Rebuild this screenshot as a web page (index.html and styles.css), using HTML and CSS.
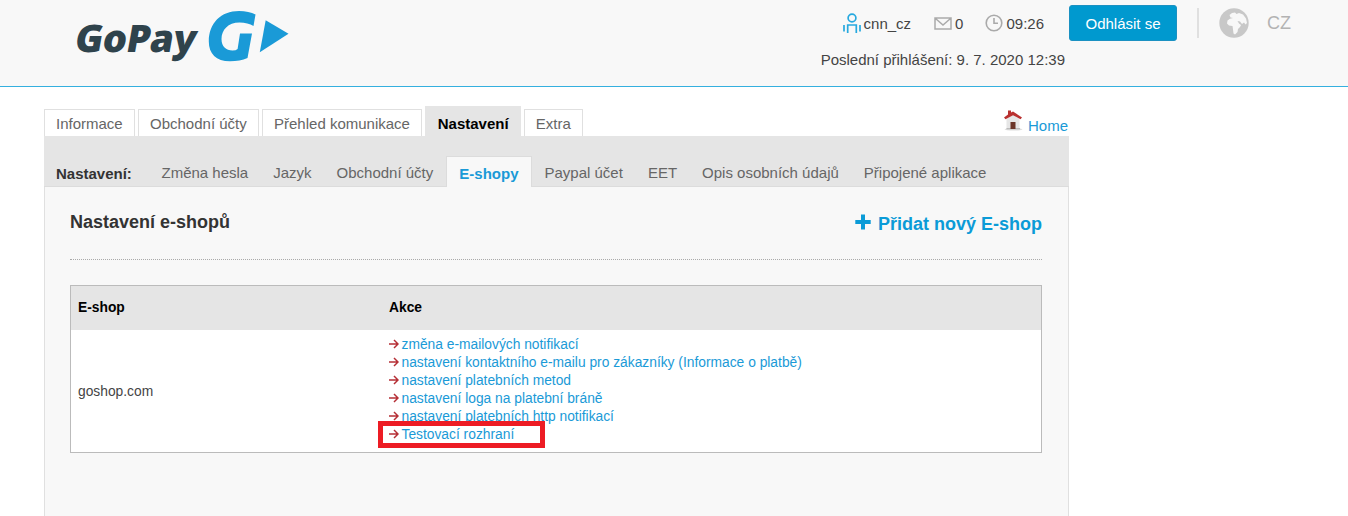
FILE: index.html
```html
<!DOCTYPE html>
<html lang="cs">
<head>
<meta charset="UTF-8">
<meta name="viewport" content="width=device-width, initial-scale=1.0">
<title>GoPay - Nastavení e-shopů</title>
<link rel="stylesheet" href="styles.css">
</head>
<body>
<header class="header">
  <a class="logo">
    <span class="logo-text">GoPay</span>
    <svg class="logo-mark" width="82" height="52" viewBox="0 0 82 52">
      <path fill="#1a9ad7" d="M47.500 4.500 L45.500 16 Q40 12.500 31.500 12.500 C20 12.500 13.500 20 13.500 29 C13.500 36.500 18 40.500 24.500 40.500 Q28 40.500 29.600 39 L32 23.500 H44 L39.500 48 Q32 51.300 22 51.300 C8 51.300 0.800 43.500 0.800 31.500 C0.800 13 13 1 31 1 Q41 1 47.500 4.500 Z"/>
      <path fill="#1a9ad7" d="M57.700 10.300 L80.500 23.700 L51.800 42.300 Z"/>
    </svg>
  </a>
  <div class="account">
    <div class="account-row">
      <span class="account-item user">
        <svg width="18" height="21" viewBox="0 0 18 21" fill="none" stroke="#27a9df" stroke-width="1.700">
          <circle cx="9" cy="5" r="3.900"/>
          <path d="M4.700 20 V12 H13.300 V20 M1 12 V18.500 M17 12 V18.500"/>
        </svg>
        <span>cnn_cz</span>
      </span>
      <span class="account-item mail">
        <svg width="18" height="13" viewBox="0 0 18 13" fill="none" stroke="#aaa" stroke-width="1.500">
          <path d="M1 1 H17 V12 H1 Z M1.500 1.500 L9 8 L16.500 1.500"/>
        </svg>
        <span>0</span>
      </span>
      <span class="account-item time">
        <svg width="18" height="18" viewBox="0 0 18 18" fill="none" stroke="#aaa" stroke-width="1.600">
          <circle cx="9" cy="9" r="7.800"/>
          <path d="M9 4 V9.300 H13"/>
        </svg>
        <span>09:26</span>
      </span>
    </div>
    <div class="last-login">Poslední přihlášení: 9. 7. 2020 12:39</div>
  </div>
  <button class="logout">Odhlásit se</button>
  <div class="language">
    <svg width="30" height="30" viewBox="0 0 30 30">
      <circle cx="15" cy="15" r="14.700" fill="#c8c8c8"/>
      <path fill="#f8f8f8" d="M10.500 7 L13 5 L16 4.500 L17.500 6 L20 5 L24 6.500 L27 10.500 L28 15 L26.500 16.500 L25 14.500 L23 16 L21 13.500 L18.500 13 L20 15.500 L22 17 L21 19 L19 21 L18.500 24 L16 26.500 L14.500 25.500 L14 21.500 L13.500 18 L10 17.500 L8 15.500 L8.500 12.500 L11 10.800 L14 10 L11.500 9.500 Z"/>
    </svg>
    <span>CZ</span>
  </div>
</header>

<main class="page">
  <div class="top">
    <nav class="tabs">
      <a class="tab">Informace</a>
      <a class="tab">Obchodní účty</a>
      <a class="tab">Přehled komunikace</a>
      <a class="tab active">Nastavení</a>
      <a class="tab">Extra</a>
    </nav>
    <a class="home">
      <svg width="20" height="21" viewBox="0 0 20 21">
        <ellipse cx="10.500" cy="19.300" rx="9" ry="1.300" fill="#ddd"/>
        <path fill="#e6e6e6" d="M3.500 9 L10 4 L16.500 9 V19 H3.500 Z"/>
        <path fill="#bbb" d="M3.500 18 H17 V19.300 H3.500 Z"/>
        <path fill="#6b3529" d="M7.500 12 H12.500 V19 H7.500 Z"/>
        <path fill="#b9302f" d="M5 0.500 H8 V2.500 L10 1.500 L19 7.500 L17.500 9.200 L10 5.200 L2.500 9.200 L1 7.500 L5 4.500 Z"/>
      </svg>
      <span>Home</span>
    </a>
  </div>

  <nav class="subnav">
    <strong class="subnav-title">Nastavení:</strong>
    <a class="subtab">Změna hesla</a>
    <a class="subtab">Jazyk</a>
    <a class="subtab">Obchodní účty</a>
    <a class="subtab active">E-shopy</a>
    <a class="subtab">Paypal účet</a>
    <a class="subtab">EET</a>
    <a class="subtab">Opis osobních údajů</a>
    <a class="subtab">Připojené aplikace</a>
  </nav>

  <section class="content">
    <div class="content-head">
      <h1>Nastavení e-shopů</h1>
      <a class="add">
        <svg width="16" height="16" viewBox="0 0 16 16"><path fill="#0b9bd7" d="M6 0.500 H10 V6 H15.700 V10 H10 V15.500 H6 V10 H0.300 V6 H6 Z"/></svg>
        <span>Přidat nový E-shop</span>
      </a>
    </div>

    <table class="shops">
      <thead>
        <tr><th class="col-shop">E-shop</th><th>Akce</th></tr>
      </thead>
      <tbody>
        <tr>
          <td>goshop.com</td>
          <td>
            <ul class="actions">
              <li><svg class="arrow" viewBox="0 0 10 10"><path d="M0 5 H8.500 M5 1 L9 5 L5 9"/></svg><a>změna e-mailových notifikací</a></li>
              <li><svg class="arrow" viewBox="0 0 10 10"><path d="M0 5 H8.500 M5 1 L9 5 L5 9"/></svg><a>nastavení kontaktního e-mailu pro zákazníky (Informace o platbě)</a></li>
              <li><svg class="arrow" viewBox="0 0 10 10"><path d="M0 5 H8.500 M5 1 L9 5 L5 9"/></svg><a>nastavení platebních metod</a></li>
              <li><svg class="arrow" viewBox="0 0 10 10"><path d="M0 5 H8.500 M5 1 L9 5 L5 9"/></svg><a>nastavení loga na platební bráně</a></li>
              <li><svg class="arrow" viewBox="0 0 10 10"><path d="M0 5 H8.500 M5 1 L9 5 L5 9"/></svg><a>nastavení platebních http notifikací</a></li>
              <li class="marked"><svg class="arrow" viewBox="0 0 10 10"><path d="M0 5 H8.500 M5 1 L9 5 L5 9"/></svg><a>Testovací rozhraní</a></li>
            </ul>
          </td>
        </tr>
      </tbody>
    </table>
  </section>
</main>
</body>
</html>
```
FILE: styles.css
```css
* {
  box-sizing: border-box;
}

body {
  margin: 0;
  height: 516px;
  overflow: hidden;
  display: flex;
  flex-direction: column;
  background-color: #fff;
  color: #444;
  font-family: "Liberation Sans", Arial, sans-serif;
  font-size: 15px;
}

svg {
  display: block;
  flex: none;
}

.header {
  display: flex;
  align-items: flex-start;
  flex: none;
  height: 87px;
  padding-left: 76px;
  background-color: #f8f8f8;
  border-bottom: 1px solid #35b0df;
}

.logo {
  display: flex;
  width: 213px;
  padding-top: 10px;
}

.logo-text {
  width: 132px;
  flex: none;
  color: #2f434c;
  font-family: "Open Sans", sans-serif;
  font-size: 38px;
  font-weight: 800;
  letter-spacing: -0.5px;
  line-height: 54px;
  transform: skewX(-10deg);
}

.account {
  width: 780px;
  padding-top: 11px;
  display: flex;
  flex-direction: column;
  align-items: flex-end;
}

.account-row {
  display: flex;
  align-items: center;
  height: 24px;
  padding-right: 25px;
  gap: 22px;
}

.account-item {
  display: flex;
  align-items: center;
  gap: 3px;
}

.mail {
  margin-left: 1px;
}

.last-login {
  margin: 16px 4px 0 0;
  line-height: 18px;
}

.logout {
  width: 108px;
  height: 36px;
  margin-top: 5px;
  padding: 0;
  border: 1px solid #1b91c2;
  border-radius: 3px;
  background-color: #0099cf;
  color: #fff;
  font: inherit;
}

.language {
  display: flex;
  align-items: center;
  height: 30px;
  margin: 8px 0 0 20px;
  padding-left: 20px;
  gap: 18px;
  border-left: 2px solid #e0e0e0;
  color: #b3b3b3;
  font-size: 18px;
}

.page {
  display: flex;
  flex-direction: column;
  flex: 1;
  width: 1025px;
  margin-left: 44px;
}

.top {
  display: flex;
  justify-content: space-between;
  height: 49px;
}

.tabs {
  display: flex;
  align-items: flex-end;
  gap: 3px;
}

.tab {
  height: 27px;
  padding: 0 11.3px 0 11px;
  border: 1px solid #e0e0e0;
  border-bottom: none;
  color: #666;
  line-height: 28px;
}

.tab.active {
  height: 30px;
  padding: 0 11.2px 0 11.5px;
  background-color: #e5e5e5;
  border-color: #e5e5e5;
  color: #000;
  font-weight: bold;
  line-height: 34px;
}

.home {
  display: flex;
  align-items: flex-start;
  gap: 5px;
  padding: 23px 1px 0 0;
  color: #1a9ad7;
}

.home span {
  margin-top: 7px;
  line-height: 18px;
}

.subnav {
  display: flex;
  align-items: flex-end;
  height: 51px;
  flex: none;
  background-color: #e5e5e5;
  border-bottom: 1px solid #dcdcdc;
}

.subnav-title {
  width: 105px;
  padding-left: 12px;
  color: #333;
  line-height: 25px;
}

.subtab {
  height: 30px;
  padding: 0 12.5px;
  color: #666;
  line-height: 33px;
}

.subtab.active {
  height: 31px;
  margin: 0 0 -1px;
  background-color: #f8f8f8;
  border: 1px solid #dcdcdc;
  border-bottom: none;
  color: #1a9ad7;
  font-weight: bold;
}

.content {
  flex: 1;
  padding: 0 26px 0 25px;
  background-color: #f8f8f8;
  border: 1px solid #e0e0e0;
  border-top: none;
  border-bottom: none;
}

.content-head {
  display: flex;
  justify-content: space-between;
  height: 73px;
  padding-top: 24px;
  border-bottom: 1px dotted #aaa;
}

h1 {
  margin: 0;
  color: #333;
  font-size: 18px;
  line-height: 22px;
}

.add {
  display: flex;
  gap: 7px;
  padding-top: 3px;
  color: #0b9bd7;
  font-size: 18px;
  font-weight: bold;
  line-height: 20px;
}

.shops {
  width: 100%;
  margin-top: 25px;
  border: 1px solid #bbb;
  border-spacing: 0;
  background-color: #fff;
  font-size: 13.8px;
}

th {
  height: 44px;
  padding: 0 8px 2px 7px;
  background-color: #e5e5e5;
  color: #000;
  text-align: left;
}

td {
  height: 122px;
  padding: 0 8px 0 7px;
}

.col-shop {
  width: 311px;
}

.actions {
  margin: 0;
  padding: 0 0 4px;
  list-style: none;
}

.actions li {
  display: flex;
  align-items: center;
  position: relative;
  height: 18px;
  gap: 2.5px;
  color: #1a9ad7;
}

.arrow {
  width: 10px;
  height: 10px;
  fill: none;
  stroke: #b52f36;
  stroke-width: 1.5;
}

.marked::after {
  content: "";
  position: absolute;
  top: -4px;
  left: -11px;
  width: 167px;
  height: 27px;
  border: 5px solid #ed1c24;
  box-sizing: border-box;
}
```
